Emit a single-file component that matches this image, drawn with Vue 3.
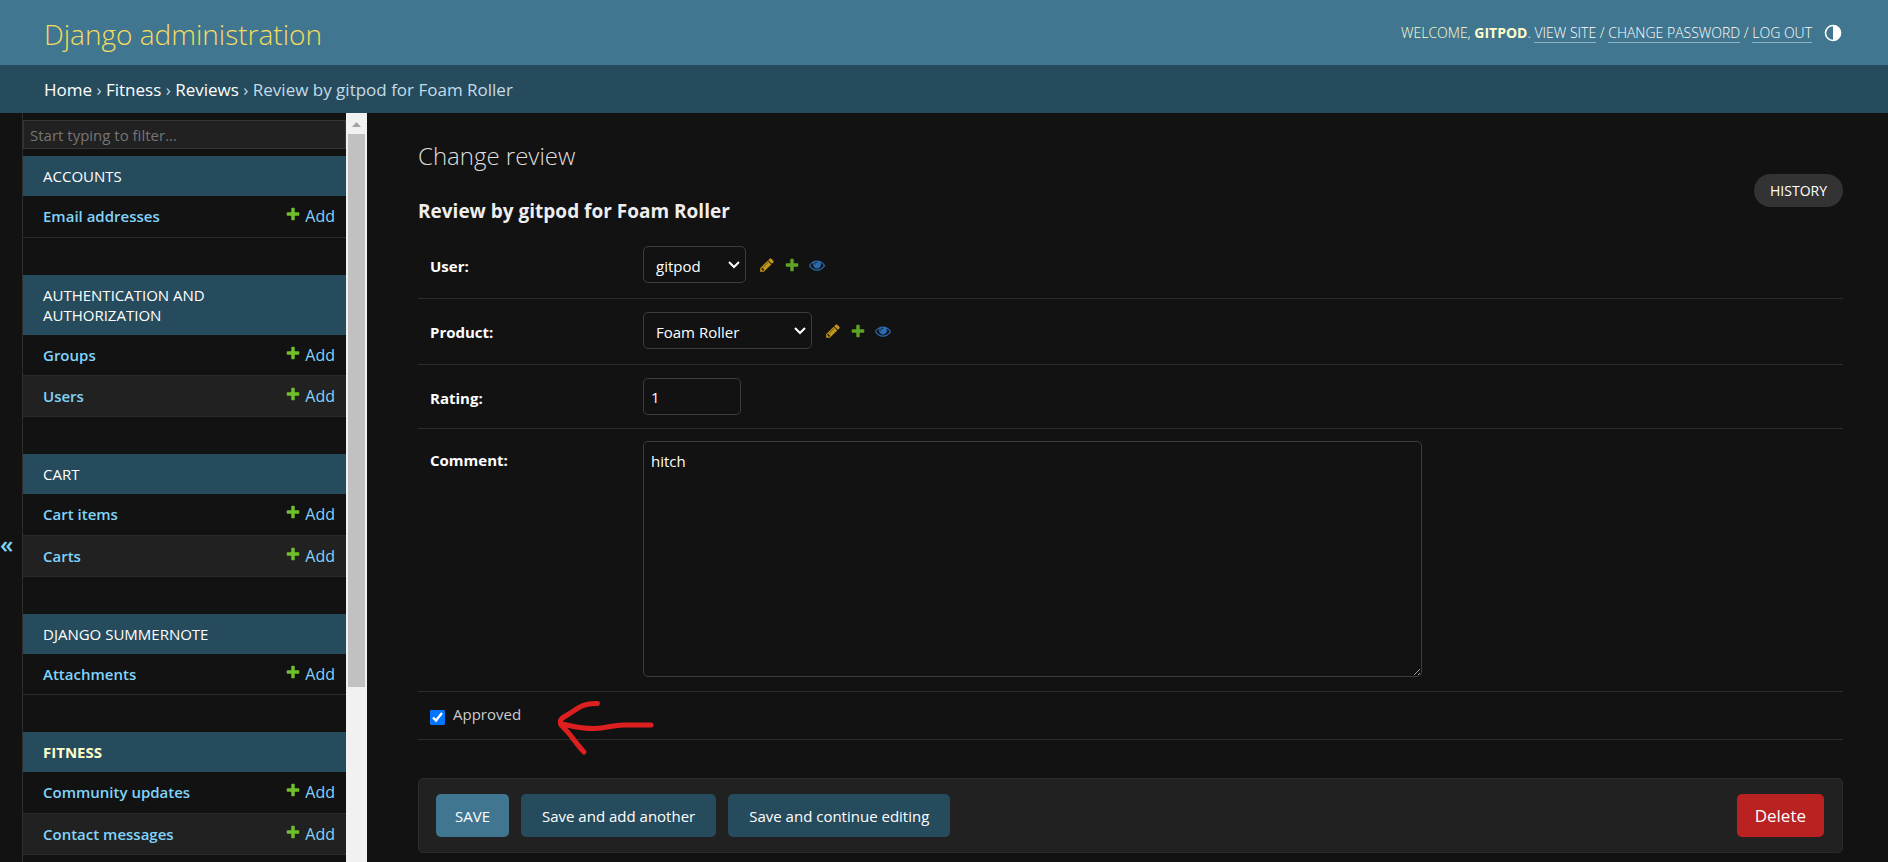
<script setup>
import { ref } from 'vue'

const apps = [
  { name: 'Accounts', models: ['Email addresses'] },
  { name: 'Authentication and Authorization', models: ['Groups', 'Users'] },
  { name: 'Cart', models: ['Cart items', 'Carts'] },
  { name: 'Django Summernote', models: ['Attachments'] },
  { name: 'Fitness', current: true, models: ['Community updates', 'Contact messages'] },
]

const crumbs = ['Home', 'Fitness', 'Reviews']

const plusPath = 'M1600 796v192q0 40-28 68t-68 28h-416v416q0 40-28 68t-68 28h-192q-40 0-68-28t-28-68v-416h-416q-40 0-68-28t-28-68v-192q0-40 28-68t68-28h416v-416q0-40 28-68t68-28h192q40 0 68 28t28 68v416h416q40 0 68 28t28 68z'
const pencilPath = 'M491 1536l91-91-235-235-91 91v107h128v128h107zm523-928q0-22-22-22-10 0-17 7l-542 542q-7 7-7 17 0 22 22 22 10 0 17-7l542-542q7-7 7-17zm-54-192l416 416-832 832h-416v-416zm683 96q0 53-37 90l-166 166-416-416 166-165q36-38 90-38 53 0 91 38l235 234q37 39 37 91z'
const eyePath = 'M1664 960q-152-236-381-353 61 104 61 225 0 185-131.5 316.5t-316.5 131.5-316.5-131.5-131.5-316.5q0-121 61-225-229 117-381 353 133 205 333.5 326.5t434.5 121.5 434.5-121.5 333.5-326.5zm-720-384q0-20-14-34t-34-14q-125 0-214.5 89.5t-89.5 214.5q0 20 14 34t34 14 34-14 14-34q0-86 61-147t147-61q20 0 34-14t14-34zm848 384q0 34-20 69-140 230-376.5 368.5t-499.5 138.5-499.5-139-376.5-368q-20-35-20-69t20-69q140-229 376.5-368t499.5-139 499.5 139 376.5 368q20 35 20 69z'

const related = [
  { label: 'Change', path: pencilPath, kind: 'change' },
  { label: 'Add', path: plusPath, kind: 'create' },
  { label: 'View', path: eyePath, kind: 'view' },
]

const selects = [
  { id: 'user', label: 'User:', value: 'gitpod' },
  { id: 'product', label: 'Product:', value: 'Foam Roller' },
]

const filter = ref('')
const rating = ref('1')
const comment = ref('hitch')
const approved = ref(true)
</script>

<template>
  <div class="page">
    <header class="header">
      <a class="brand" href="#">Django administration</a>
      <div class="tools">
        <p>
          Welcome, <strong>gitpod</strong>.
          <a href="#">View site</a> / <a href="#">Change password</a> / <a href="#">Log out</a>
        </p>
        <button class="theme" type="button" aria-label="Toggle theme">
          <svg viewBox="0 0 18 18" width="18" height="18">
            <circle cx="9" cy="9" r="7.5" fill="none" stroke="currentColor" stroke-width="1.6" />
            <path d="M9 1a8 8 0 0 1 0 16z" fill="currentColor" />
          </svg>
        </button>
      </div>
    </header>

    <nav class="breadcrumbs" aria-label="Breadcrumbs">
      <template v-for="crumb in crumbs" :key="crumb"><a href="#">{{ crumb }}</a> › </template>Review by gitpod for Foam Roller
    </nav>

    <div class="body">
      <div class="rail">
        <button class="toggle" type="button" aria-label="Toggle navigation">«</button>
      </div>

      <nav class="sidebar" aria-label="Sidebar">
        <div class="modules">
          <input v-model="filter" class="filter" type="search" placeholder="Start typing to filter..." aria-label="Filter navigation items">
          <table v-for="app in apps" :key="app.name" class="module">
            <caption><a href="#" :class="{ current: app.current }">{{ app.name }}</a></caption>
            <tbody>
              <tr v-for="model in app.models" :key="model">
                <th scope="row"><a href="#">{{ model }}</a></th>
                <td>
                  <a class="add" href="#">
                    <svg viewBox="0 0 1792 1792" width="16" height="16"><path :d="plusPath" /></svg>Add
                  </a>
                </td>
              </tr>
            </tbody>
          </table>
        </div>
        <div class="track" aria-hidden="true">
          <svg viewBox="0 0 21 21" width="21" height="21"><path d="M6 14l4.500-5 4.500 5z" fill="#a3a3a3" /></svg>
          <div class="thumb"></div>
        </div>
      </nav>

      <main class="content">
        <h1>Change review</h1>
        <div class="title-row">
          <h2>Review by gitpod for Foam Roller</h2>
          <a class="history" href="#">History</a>
        </div>

        <form @submit.prevent>
          <div v-for="field in selects" :key="field.id" class="row">
            <label :for="field.id">{{ field.label }}</label>
            <div class="related">
              <div class="select">
                <select :id="field.id" :class="field.id"><option>{{ field.value }}</option></select>
                <svg viewBox="0 0 12 8" width="12" height="8"><path d="M1 1l5 5 5-5" fill="none" stroke="#fff" stroke-width="2" /></svg>
              </div>
              <a v-for="icon in related" :key="icon.kind" href="#" :class="icon.kind" :aria-label="icon.label">
                <svg viewBox="0 0 1792 1792" width="16" height="16"><path :d="icon.path" /></svg>
              </a>
            </div>
          </div>
          <div class="row rating">
            <label for="rating">Rating:</label>
            <input id="rating" v-model="rating" type="text" inputmode="numeric">
          </div>
          <div class="row comment">
            <label for="comment">Comment:</label>
            <textarea id="comment" v-model="comment"></textarea>
          </div>
          <div class="row approved">
            <input id="approved" v-model="approved" type="checkbox">
            <label for="approved">Approved</label>
            <svg class="arrow" viewBox="0 0 160 90" width="160" height="90" aria-hidden="true">
              <path d="M77.500 23.500C66 23 60 26 52 32C45 37 38 38 41 45C45 49 50 54 54 60C58 65 60 68 64 72M42 44C52 46 62 49 75 48.500C87 48 92 45 104 45L131 45" />
            </svg>
          </div>

          <div class="submit">
            <button class="save" type="submit">SAVE</button>
            <button type="submit">Save and add another</button>
            <button type="submit">Save and continue editing</button>
            <a class="delete" href="#">Delete</a>
          </div>
        </form>
      </main>
    </div>
  </div>
</template>

<style>
body {
  background: #121212;
}
</style>

<style scoped>
.page {
  display: flex;
  flex-direction: column;
  height: 100vh;
  overflow: hidden;
  background: #121212;
  color: #eee;
  font-family: "Open Sans", "Noto Sans", sans-serif;
  font-size: 15px;
  line-height: 20px;
}
.page * {
  box-sizing: border-box;
}
a {
  color: #81d4fa;
  text-decoration: none;
}
svg {
  display: block;
}
button, input, select, textarea {
  font: inherit;
}
h1, h2, p {
  margin: 0;
}

.header {
  flex: none;
  display: flex;
  align-items: center;
  justify-content: space-between;
  height: 65px;
  padding: 0 46px 0 44px;
  background: #417690;
}
.brand {
  padding-top: 2px;
  color: #f5dd5d;
  font-size: 28px;
  font-weight: 300;
  line-height: 36px;
}
.tools {
  display: flex;
  align-items: center;
  gap: 12px;
  color: #ffc;
  font-size: 14px;
  font-weight: 300;
  text-transform: uppercase;
}
.tools a {
  border-bottom: 1px solid #8db0c0;
  color: #fff;
}
.tools strong {
  font-weight: 700;
}
.theme {
  padding: 0;
  border: 0;
  background: none;
  color: #fff;
}

.breadcrumbs {
  flex: none;
  height: 48px;
  padding: 0 44px;
  background: #264b5d;
  color: #c4dce8;
  font-size: 17px;
  line-height: 50px;
}
.breadcrumbs a {
  color: #fff;
}

.body {
  flex: 1;
  display: flex;
  min-height: 0;
}
.rail {
  flex: none;
  width: 23px;
  border-right: 1px solid #2f2f2f;
}
.toggle {
  width: 100%;
  height: 100vh;
  padding: 0;
  border: 0;
  background: none;
  color: #81d4fa;
  font-size: 24px;
  font-weight: 600;
  line-height: 24px;
  text-align: left;
}
.sidebar {
  flex: none;
  display: flex;
  width: 344px;
  overflow: hidden;
}
.modules {
  flex: 1;
  padding-top: 7px;
}
.filter {
  display: block;
  width: 100%;
  height: 29px;
  margin-bottom: 7px;
  padding: 0 6px;
  border: 1px solid #353535;
  background: #212121;
  color: #eee;
  appearance: none;
}
.filter::placeholder {
  color: #757575;
}
.track {
  width: 21px;
  background: #f1f1f1;
}
.thumb {
  height: 553px;
  margin: 0 2px;
  background: #c1c1c1;
}

.module {
  width: 100%;
  margin-bottom: 37px;
  border-collapse: collapse;
}
caption {
  padding: 10px 110px 10px 20px;
  background: #264b5d;
  text-align: left;
  text-transform: uppercase;
}
caption a {
  color: #fff;
}
caption .current {
  color: #ffc;
  font-weight: 700;
}
.module tr {
  height: 41px;
  border-bottom: 1px solid #2b2b2b;
}
.module tr:nth-child(even) {
  background: #212121;
}
th, td {
  padding: 0 0 0 20px;
}
th {
  text-align: left;
  font-weight: 600;
}
td {
  padding-right: 11px;
}
.add {
  display: flex;
  justify-content: flex-end;
  gap: 4px;
  font-size: 16px;
}
.add svg {
  fill: #70bf2b;
}

.content {
  flex: 1;
  padding: 29px 45px 0 51px;
}
h1 {
  color: #ddd;
  font-size: 24px;
  font-weight: 300;
  line-height: 28px;
}
.title-row {
  display: flex;
  justify-content: space-between;
  align-items: flex-start;
  height: 59px;
  margin-top: 4px;
}
h2 {
  padding-top: 24px;
  font-size: 19px;
  font-weight: 700;
  line-height: 26px;
}
.history {
  padding: 7px 16px 6px;
  border-radius: 17px;
  background: #333;
  color: #fff;
  font-size: 14px;
  text-transform: uppercase;
}

.row {
  display: flex;
  align-items: flex-start;
  height: 66px;
  padding: 13px 12px;
  border-bottom: 1px solid #2b2b2b;
}
.row > label {
  width: 213px;
  padding-top: 10px;
  color: #fff;
  font-weight: 700;
}
.related {
  display: flex;
  align-items: center;
  gap: 9px;
}
.select {
  display: grid;
  align-items: center;
  margin-right: 4px;
}
.select > * {
  grid-area: 1 / 1;
}
.select svg {
  justify-self: end;
  margin-right: 6px;
  pointer-events: none;
}
select, .rating input, textarea {
  height: 37px;
  padding: 0 7px;
  border: 1px solid #3d3d3d;
  border-radius: 5px;
  background: #121212;
  color: #fff;
}
select {
  width: 103px;
  padding: 2px 12px 0;
  appearance: none;
}
.product {
  width: 169px;
}
.change {
  fill: #c1961a;
}
.create {
  fill: #5fa225;
}
.view {
  fill: #2b6cb0;
}
.rating {
  height: 64px;
}
.rating input {
  width: 98px;
}
.comment {
  height: 263px;
  padding-top: 12px;
}
.comment > label {
  padding-top: 9px;
}
textarea {
  width: 779px;
  height: 236px;
  padding: 9px 7px;
}
.approved {
  position: relative;
  height: 48px;
  gap: 8px;
  padding-top: 12px;
}
.approved input {
  width: 15px;
  height: 15px;
  margin: 6px 0 0;
  accent-color: #0075ff;
}
.approved > label {
  width: auto;
  padding-top: 0;
  color: #ccc;
  font-weight: 400;
}
.arrow {
  position: absolute;
  left: 102px;
  top: -12px;
  fill: none;
  stroke: #de1f1f;
  stroke-width: 5;
  stroke-linecap: round;
  stroke-linejoin: round;
}

.submit {
  display: flex;
  gap: 12px;
  margin-top: 38px;
  padding: 15px 18px 15px 17px;
  border: 1px solid #2b2b2b;
  border-radius: 5px;
  background: #212121;
}
.submit button, .delete {
  height: 43px;
  padding: 0 21px;
  border: 0;
  border-radius: 5px;
  background: #264b5d;
  color: #fff;
}
.submit .save {
  padding: 0 19px;
  background: #417690;
}
.submit .delete {
  margin-left: auto;
  padding: 0 18px;
  background: #ba2121;
  font-size: 17px;
  line-height: 43px;
}
</style>
